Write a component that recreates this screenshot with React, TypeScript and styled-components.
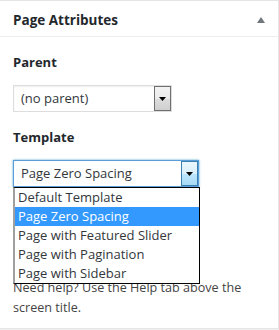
import styled, { createGlobalStyle } from 'styled-components';

const GlobalStyle = createGlobalStyle`
  body {
    margin: 0;
    background: #f1f1f1;
    font-family: "Open Sans", "Noto Sans", sans-serif;
  }
`;

const templates = [
  'Default Template',
  'Page Zero Spacing',
  'Page with Featured Slider',
  'Page with Pagination',
  'Page with Sidebar',
];

const ArrowIcon = () => (
  <svg width="7" height="4" viewBox="0 0 7 4">
    <path d="M0 0h7L3.5 4z" fill="#000" />
  </svg>
);

export default function App() {
  return (
    <>
      <GlobalStyle />
      <Panel>
        <Header>
          <Title>Page Attributes</Title>
          <Toggle />
        </Header>
        <Body>
          <Label>Parent</Label>
          <Select width={159}>
            <SelectValue>(no parent)</SelectValue>
            <SelectButton>
              <ArrowIcon />
            </SelectButton>
          </Select>
          <Label>Template</Label>
          <Select width={186} focused>
            <SelectValue>Page Zero Spacing</SelectValue>
            <SelectButton focused>
              <ArrowIcon />
            </SelectButton>
            <OptionList>
              {templates.map((t) => (
                <Option key={t} selected={t === 'Page Zero Spacing'}>
                  {t}
                </Option>
              ))}
            </OptionList>
          </Select>
          <Help>Need help? Use the Help tab above the screen title.</Help>
        </Body>
      </Panel>
    </>
  );
}

const Panel = styled.div`
  box-sizing: border-box;
  width: 280px;
  height: 329px;
  margin-left: -1px;
  background: #fff;
  border: 1px solid #e5e5e5;
`;

const Header = styled.div`
  display: flex;
  align-items: center;
  justify-content: space-between;
  height: 36px;
  padding: 2px 12px 0 13px;
  box-sizing: border-box;
  border-bottom: 1px solid #eee;
`;

const Title = styled.h2`
  margin: 0;
  font-size: 13.5px;
  font-weight: 700;
  color: #23282d;
`;

const Toggle = styled.span`
  width: 0;
  height: 0;
  margin-right: 1px;
  border-left: 4px solid transparent;
  border-right: 4px solid transparent;
  border-bottom: 6px solid #72777c;
`;

const Body = styled.div`
  padding: 0 12px 0 13px;
`;

const Label = styled.div`
  margin-top: 15px;
  font-size: 13px;
  line-height: 20px;
  font-weight: 700;
  color: #23282d;
`;

const Select = styled.div<{ width: number; focused?: boolean }>`
  position: relative;
  box-sizing: border-box;
  display: flex;
  width: ${({ width }) => width}px;
  height: 27px;
  margin-top: 13px;
  background: #fff;
  border: 1px solid ${({ focused }) => (focused ? '#5b9dd9' : '#ddd')};
  box-shadow: ${({ focused }) =>
    focused ? '0 0 2px rgba(30, 140, 190, 0.8)' : 'inset 0 1px 2px rgba(0, 0, 0, 0.07)'};
`;

const SelectValue = styled.div`
  flex: 1;
  padding-left: 7px;
  font-size: 13px;
  line-height: 25px;
  color: #32373c;
  white-space: nowrap;
`;

const SelectButton = styled.div<{ focused?: boolean }>`
  box-sizing: border-box;
  display: flex;
  align-items: center;
  justify-content: center;
  width: 17px;
  height: 100%;
  border: 1px solid ${({ focused }) => (focused ? '#3c7fb1' : '#707070')};
  background: ${({ focused }) =>
    focused
      ? 'linear-gradient(#eaf6fd 0%, #d9f0fc 50%, #bee6fd 51%, #a7d9f5 100%)'
      : 'linear-gradient(#f2f2f2 0%, #ebebeb 50%, #dddddd 51%, #cfcfcf 100%)'};
`;

const OptionList = styled.ul`
  position: absolute;
  top: calc(100% + 1px);
  left: -1px;
  box-sizing: border-box;
  width: 187px;
  margin: 0;
  padding: 0;
  list-style: none;
  background: #fff;
  border: 1px solid #000;
  border-left: 2px solid #a0a0a0;
`;

const Option = styled.li<{ selected?: boolean }>`
  height: 19px;
  padding-left: 3px;
  font-size: 13px;
  line-height: 19px;
  white-space: nowrap;
  color: ${({ selected }) => (selected ? '#fff' : '#32373c')};
  background: ${({ selected }) => (selected ? '#3399ff' : 'transparent')};
`;

const Help = styled.p`
  margin: 91px 0 0;
  font-size: 12.6px;
  line-height: 20px;
  color: #444;
`;
